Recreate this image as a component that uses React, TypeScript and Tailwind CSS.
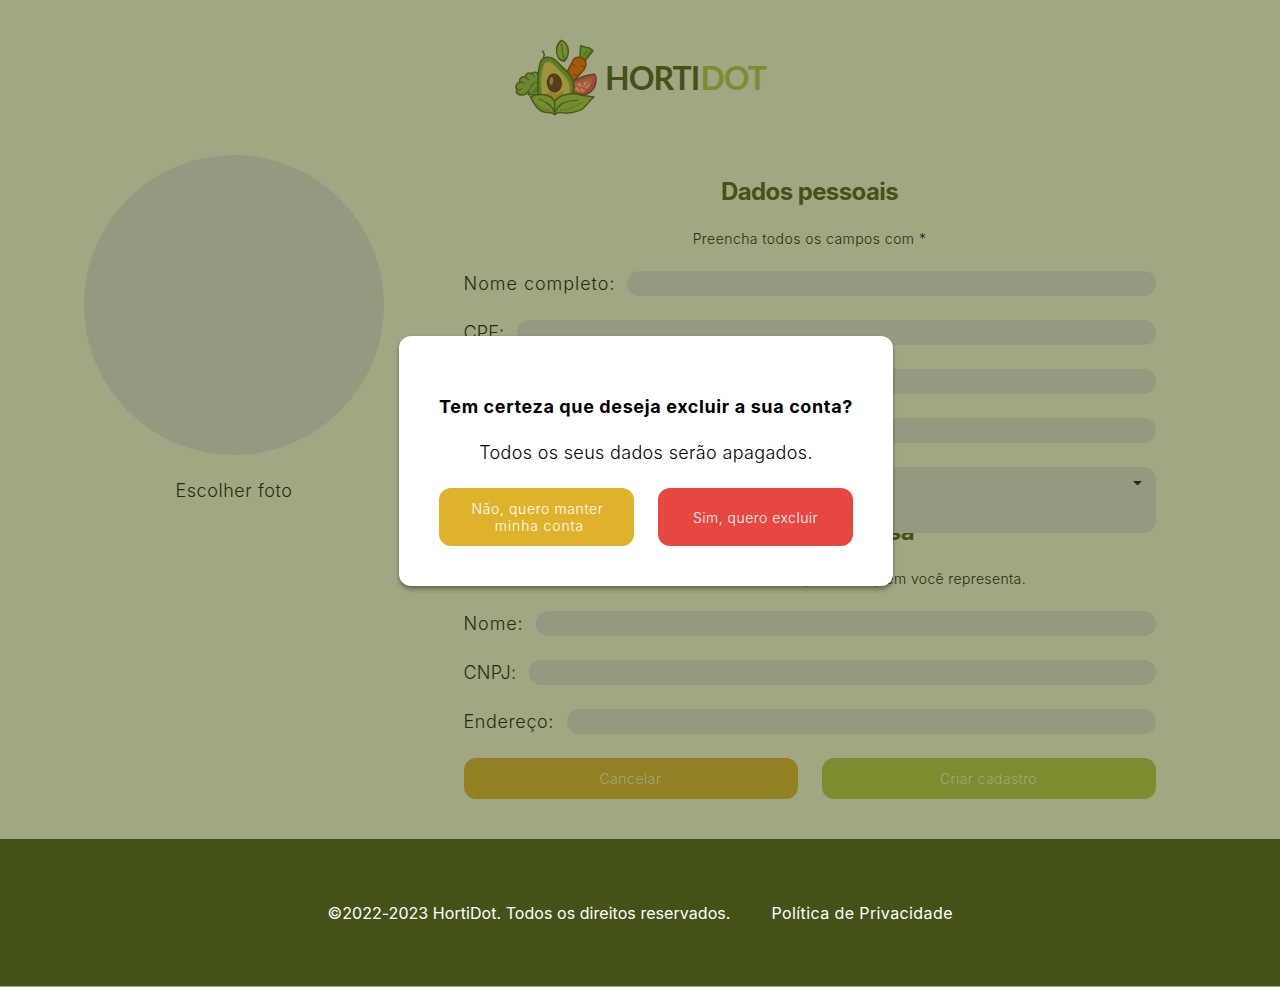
import type { ReactNode } from "react";

function ProduceLogo() {
  return (
    <svg width="100" height="95" viewBox="0 0 300 285" className="shrink-0" fill="none" stroke="#455a19" strokeWidth="4.5" strokeLinejoin="round" strokeLinecap="round">
      {/* leaf */}
      <path d="M169 31C154 43 150 64 160 82Q166 92 178 94C188 84 193 66 188 51Q183 36 169 31Z" fill="#748e2e" />
      <path d="M170 43Q170 65 178 90" strokeWidth="3" />
      {/* carrot */}
      <path d="M225 82L227 47L242 52L251 53L264 62L241 91Z" fill="#668a24" />
      <path d="M246 60L233 82M254 64L239 84" stroke="#4b701e" strokeWidth="3" />
      <path d="M206 88C214 78 232 80 240 91C246 101 242 114 234 122L206 153L187 124Z" fill="#a35b0b" stroke="#68430d" />
      <path d="M202 103L211 107M229 107L238 111M207 133L216 137" stroke="#743f0c" strokeWidth="3" />
      {/* tomato */}
      <path d="M204 153Q235 136 267 133Q273 134 273 148C273 170 262 187 240 194L207 190Z" fill="#9b4e35" stroke="#69421f" />
      <path d="M209 157Q235 145 262 142C263 164 254 184 231 187L207 184Z" fill="#a7593f" stroke="#984b31" strokeWidth="2" />
      <path d="M216 163L225 158L230 170ZM237 158L249 154L236 170ZM256 160Q254 169 246 174L240 173ZM210 176L217 171L225 187ZM227 176L230 187L240 184Z" fill="#bd8263" stroke="#bd8263" strokeWidth="1.5" />
      {/* broccoli */}
      <path d="M98 130C92 124 83 127 79 130C69 126 60 132 62 141C50 138 40 147 45 157C33 160 29 172 36 179C31 187 38 197 50 194C56 197 64 193 66 187L72 187L69 194L100 194L101 158Z" fill="#6c8730" />
      <path d="M62 142Q65 149 71 149M45 158Q52 154 58 160M36 179Q45 183 51 176M79 131Q88 134 89 141M66 186L76 176L81 162M82 167L88 158L98 156" strokeWidth="3" />
      <path d="M74 189L98 167V191Z" fill="#5c792b" stroke="none" />
      {/* avocado */}
      <path d="M116 81L118 73L113 63" />
      <path d="M101 200C96 161 99 126 104 104C107 88 118 80 133 82C148 82 158 98 173 112C194 130 209 149 206 180L199 200Z" fill="#5a7d25" />
      <path d="M111 197C106 165 107 132 114 113C117 98 124 94 136 97C150 103 156 116 171 130C188 147 199 162 194 197L150 214Z" fill="#a0933b" stroke="#788b32" strokeWidth="3" />
      <path d="M120 196Q137 200 150 214Q159 199 180 195Q176 190 171 184Q155 198 131 184Z" fill="#99812c" stroke="none" />
      <ellipse cx="148" cy="159" rx="21" ry="27" fill="#573e1b" stroke="#473718" strokeWidth="3" transform="rotate(-9 148 159)" />
      <ellipse cx="139" cy="153" rx="5" ry="11" fill="#92794b" stroke="none" transform="rotate(7 139 153)" />
      {/* front leaves */}
      <path d="M76 201Q94 191 119 194Q142 198 149 215Q158 199 182 194Q208 188 229 196L267 201Q255 211 245 224C228 248 195 250 172 248Q158 246 149 254Q142 247 121 247C98 243 88 222 76 201Z" fill="#748e2e" />
      <path d="M149 215V252M149 250Q157 227 177 218M149 250Q143 229 124 218" strokeWidth="4" />
      <path d="M177 218Q194 210 218 211M124 218Q114 210 102 208" strokeWidth="3" />
      <path d="M166 240Q198 240 229 219M96 223Q107 239 133 241" stroke="#5f7c28" strokeWidth="4" />
    </svg>
  );
}

function SectionTitle({ children, className }: { children: ReactNode; className: string }) {
  return <h2 className={`h-[30px] text-center text-[24px] leading-[32px] font-bold whitespace-nowrap text-[#445218] ${className}`}>{children}</h2>;
}

function Field({ label, labelClass }: { label: string; labelClass: string }) {
  return (
    <label className="flex h-[25px] items-center gap-3">
      <span className={`shrink-0 whitespace-nowrap text-[18px] leading-[25px] ${labelClass}`}>{label}</span>
      <span className="h-[25px] flex-1 rounded-[12px] bg-[#949a7f]" />
    </label>
  );
}

function Backdrop() {
  return (
    <div className="text-[#252e0b]">
      <header className="flex h-[155.5px] items-start pt-[30px] pl-[505px]">
        <ProduceLogo />
        <h1 className="pt-[28px] text-[32px] leading-[40px] font-bold font-['Lato',sans-serif] whitespace-nowrap">
          <span className="inline-block w-[95.5px] tracking-[-1px] text-[#445218]">HORTI</span>
          <span className="tracking-[-1.1px] text-[#7c8d2f]">DOT</span>
        </h1>
      </header>
      <main className="flex h-[683px] gap-[79.5px] pl-[84px]">
        <section className="-mt-[0.5px] flex w-[300px] shrink-0 flex-col items-center gap-[22.5px]">
          <div className="size-[300px] rounded-full bg-[#949a7f]" />
          <p className="text-[18px] leading-[25px] tracking-[0.57px]">Escolher foto</p>
        </section>
        <section className="flex w-[692px] flex-col gap-6 pt-5">
          <SectionTitle className="tracking-[-0.6px]">Dados pessoais</SectionTitle>
          <p className="h-[17px] text-center text-[14px] leading-[17px] tracking-[0.44px]">Preencha todos os campos com *</p>
          <Field label="Nome completo:" labelClass="w-[151px] tracking-[0.97px]" />
          <Field label="CPF:" labelClass="w-[41px] tracking-[0.2px]" />
          <Field label="Email:" labelClass="w-[60px]" />
          <Field label="Telefone:" labelClass="w-[84px]" />
          <div className="relative z-10 h-[25px]">
            <div className="flex h-[66px] w-[692.5px] items-start justify-end rounded-[12px] bg-[#949a7f] pt-[14px] pr-[14px]">
              <svg width="9" height="5" viewBox="0 0 9 5"><path d="M0 0H9L4.5 4.5Z" fill="#252e0b" /></svg>
            </div>
          </div>
          <SectionTitle className="tracking-[-0.5px]">Dados da empresa</SectionTitle>
          <p className="h-[17px] text-center text-[14px] leading-[17px] tracking-[0.35px]">Preencha com os dados da empresa de quem você representa.</p>
          <Field label="Nome:" labelClass="w-[60px] tracking-[0.9px]" />
          <Field label="CNPJ:" labelClass="w-[53px] tracking-[0.25px]" />
          <Field label="Endereço:" labelClass="w-[91px] tracking-[0.62px]" />
          <div className="flex gap-6 text-[14px] text-[#a1a783]">
            <button className="h-[41px] flex-1 rounded-[12px] bg-[#918122] tracking-[0.5px]">Cancelar</button>
            <button className="h-[41px] flex-1 rounded-[12px] bg-[#7c8d2f] tracking-[0.4px]">Criar cadastro</button>
          </div>
        </section>
      </main>
      <footer className="flex h-[147.5px] items-center gap-[41px] bg-[#445218] pl-[327.5px] text-[16px] font-normal whitespace-nowrap text-white">
        <p className="w-[403px] pt-px tracking-[0.05px]">©2022-2023 HortiDot. Todos os direitos reservados.</p>
        <a className="pt-px tracking-[0.4px]">Política de Privacidade</a>
      </footer>
    </div>
  );
}

function ConfirmDialog() {
  return (
    <div role="dialog" className="absolute top-[336px] left-[399px] z-20 flex h-[250px] w-[494px] flex-col items-center rounded-[12px] bg-white px-10 pt-[59px] whitespace-nowrap text-black shadow-[0_4px_4px_rgba(0,0,0,0.25),0_1px_3px_rgba(0,0,0,0.2)]">
      <h3 className="text-[18px] leading-[24px] font-bold tracking-[0.62px]">Tem certeza que deseja excluir a sua conta?</h3>
      <p className="mt-[22px] text-[18px] leading-[24px] tracking-[0.33px]">Todos os seus dados serão apagados.</p>
      <div className="mt-[23px] flex w-full gap-6 text-[14px] leading-[17px] text-white">
        <button className="flex h-[58px] flex-1 flex-col items-center justify-center rounded-[12px] bg-[#deb32b]">
          <span className="pl-[2px] tracking-[0.6px]">Não, quero manter</span>
          <span className="pl-[6px] tracking-[0.85px]">minha conta</span>
        </button>
        <button className="h-[58px] flex-1 rounded-[12px] bg-[#e84641] tracking-[0.48px]">Sim, quero excluir</button>
      </div>
    </div>
  );
}

export default function App() {
  return (
    <div className="relative h-[987px] w-[1280px] overflow-hidden bg-[#a1a783] font-['Inter','Liberation_Sans',sans-serif] [font-weight:350]">
      <Backdrop />
      <ConfirmDialog />
    </div>
  );
}
